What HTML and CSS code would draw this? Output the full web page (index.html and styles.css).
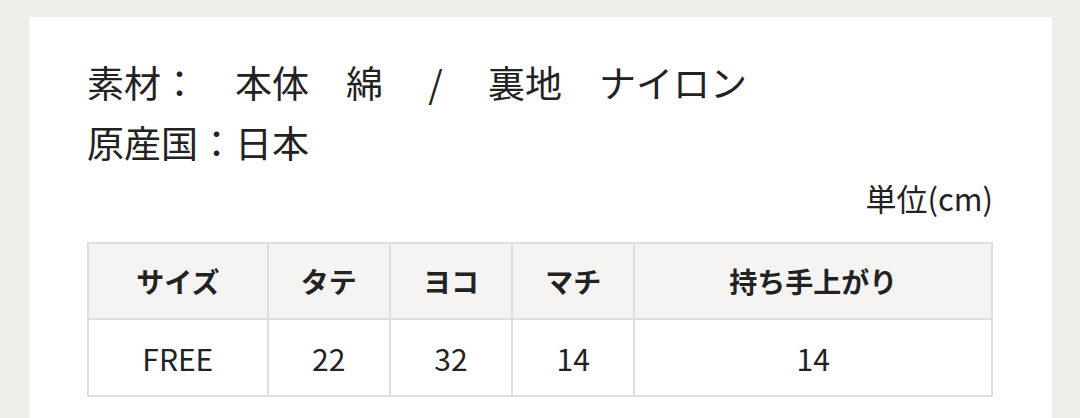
FILE: index.html
```html
<!DOCTYPE html>
<html lang="ja">
<head>
<meta charset="utf-8">
<title>サイズ</title>
<link rel="stylesheet" href="styles.css">
</head>
<body>
<main class="card">
  <div class="spec">
    <p class="spec-line">素材：　本体　綿　 / 　裏地　ナイロン</p>
    <p class="spec-line">原産国：日本</p>
  </div>
  <p class="unit">単位(cm)</p>
  <table class="size-table">
    <thead>
      <tr>
        <th class="col-size">サイズ</th>
        <th class="col-num">タテ</th>
        <th class="col-num">ヨコ</th>
        <th class="col-num">マチ</th>
        <th class="col-handle">持ち手上がり</th>
      </tr>
    </thead>
    <tbody>
      <tr>
        <td>FREE</td>
        <td>22</td>
        <td>32</td>
        <td>14</td>
        <td>14</td>
      </tr>
    </tbody>
  </table>
</main>
</body>
</html>
```

FILE: styles.css
```css
html, body {
  margin: 0;
  padding: 0;
}
body {
  background: #eeede9;
  font-family: "Noto Sans CJK JP", "Noto Sans", sans-serif;
  color: #222;
  padding: 17px 28px 0 29px;
  height: 418px;
  box-sizing: border-box;
  overflow: hidden;
}
.card {
  background: #fff;
  height: 100%;
  padding: 35px 59px 0 58px;
  box-sizing: border-box;
}
.spec-line {
  margin: 0;
  font-size: 37px;
  line-height: 60px;
  white-space: pre;
}
.unit {
  margin: 6px 0 0;
  text-align: right;
  font-size: 31px;
  line-height: 40px;
}
.size-table {
  margin-top: 24px;
  width: 100%;
  border-collapse: collapse;
  table-layout: fixed;
  text-align: center;
}
.size-table th,
.size-table td {
  border: 2px solid #dedede;
  padding: 0;
}
.size-table th {
  background: #f5f4f2;
  font-size: 28px;
  font-weight: 700;
  height: 74px;
}
.size-table td {
  font-size: 30px;
  height: 75px;
}
.col-size { width: 19.65%; }
.col-num { width: 13.3%; }
```
